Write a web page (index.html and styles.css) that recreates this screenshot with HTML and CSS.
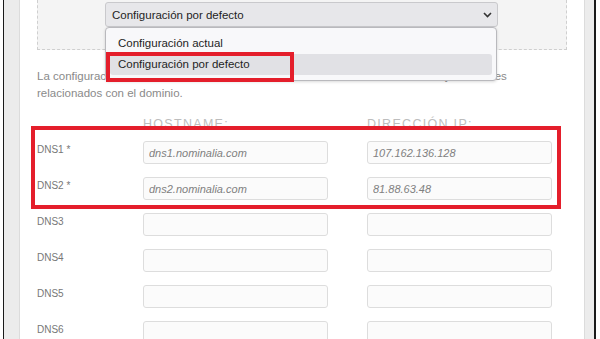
FILE: index.html
```html
<!DOCTYPE html>
<html lang="es">
<head>
  <meta charset="UTF-8">
  <meta name="viewport" content="width=device-width, initial-scale=1.0">
  <title>Servidores DNS</title>
  <link rel="stylesheet" href="styles.css">
</head>
<body>
  <div class="frame">
    <div class="rail rail-left"></div>
    <main class="panel">
      <div class="config-box">
        <div class="select-wrap">
          <div class="select">
            <span>Configuración por defecto</span>
            <svg class="chevron" width="9" height="6" viewBox="0 0 9 6">
              <path d="M1 1l3.5 3.5L8 1" fill="none" stroke="#333" stroke-width="1.6"/>
            </svg>
          </div>
          <ul class="select-menu">
            <li>Configuración actual</li>
            <li class="active">Configuración por defecto</li>
          </ul>
          <span class="mark mark-option"></span>
        </div>
      </div>

      <p class="intro">La configuración por defecto asigna los DNS de Nominalia a todos los servicios y servidores relacionados con el dominio.</p>

      <div class="dns-grid">
        <span></span>
        <span class="col-head">Hostname:</span>
        <span class="col-head">Dirección IP:</span>

        <label>DNS1 *</label>
        <input type="text" value="dns1.nominalia.com">
        <input type="text" value="107.162.136.128">

        <label>DNS2 *</label>
        <input type="text" value="dns2.nominalia.com">
        <input type="text" value="81.88.63.48">

        <label>DNS3</label>
        <input type="text">
        <input type="text">

        <label>DNS4</label>
        <input type="text">
        <input type="text">

        <label>DNS5</label>
        <input type="text">
        <input type="text">

        <label>DNS6</label>
        <input type="text">
        <input type="text">
      </div>

      <span class="mark mark-rows"></span>
    </main>
    <div class="rail rail-right"></div>
  </div>
</body>
</html>
```

FILE: styles.css
```css
body {
  margin: 0;
  background-color: #ffffff;
  font-family: 'Liberation Sans', Arial, sans-serif;
}
.frame {
  display: flex;
  height: 100vh;
  margin: 0 4px 0 3px;
  border-left: 1px solid #1a1a1a;
  border-right: 2px solid #1a1a1a;
  overflow: hidden;
}
.rail {
  background-color: #ececec;
}
.rail-left {
  width: 15px;
  border-right: 1px solid #dcdcdc;
}
.rail-right {
  width: 9px;
  border-left: 1px solid #dcdcdc;
}
.panel {
  flex: 1;
  position: relative;
  padding: 0 17px;
  background-color: #ffffff;
}
.config-box {
  padding: 2px 0 22px 67px;
  background-color: #f4f4f4;
  border: 1px dashed #cfcfcf;
  border-top: none;
}
.select-wrap {
  position: relative;
  width: 393px;
}
.select {
  display: flex;
  align-items: center;
  justify-content: space-between;
  height: 25px;
  box-sizing: border-box;
  padding: 0 5px 0 6px;
  background-color: #e7e7ea;
  border: 1px solid #c9c9cc;
  border-radius: 3px;
  font-size: 11.5px;
  color: #1e1e1e;
}
.select-menu {
  position: absolute;
  top: 25px;
  left: 0;
  width: 392px;
  height: 54px;
  box-sizing: border-box;
  margin: 0;
  padding: 5px 4px 4px;
  list-style: none;
  background-color: #f8f8fa;
  border: 1px solid #b9b9bd;
  border-radius: 4px;
  box-shadow: 0 1px 3px rgba(0, 0, 0, 0.15);
  font-size: 11.5px;
  color: #1e1e1e;
}
.select-menu li {
  height: 21px;
  line-height: 21px;
  padding: 0 8px;
  border-radius: 3px;
}
.select-menu li.active {
  background-color: #e1e1e5;
}
.mark {
  position: absolute;
  box-sizing: border-box;
  border: 4px solid #e41e2b;
}
.mark-option {
  left: 1px;
  top: 50px;
  width: 188px;
  height: 30px;
}
.mark-rows {
  left: 11px;
  top: 126px;
  width: 530px;
  height: 83px;
}
.intro {
  margin: 18px 0 0;
  font-size: 11.5px;
  line-height: 17px;
  color: #8a8a8a;
}
.dns-grid {
  display: grid;
  grid-template-columns: 67px 185px 185px;
  column-gap: 39px;
  row-gap: 13px;
  margin-top: 15px;
}
.col-head {
  margin-bottom: -3px;
  font-size: 12.5px;
  line-height: 14px;
  letter-spacing: 1.3px;
  text-transform: uppercase;
  color: #bdbdbd;
}
.dns-grid label {
  padding-top: 3px;
  font-size: 10px;
  line-height: 12px;
  color: #777777;
}
.dns-grid input {
  height: 23px;
  box-sizing: border-box;
  padding: 0 5px;
  background-color: #fbfbfb;
  border: 1px solid #dddddd;
  border-radius: 3px;
  font-family: 'Liberation Sans', Arial, sans-serif;
  font-size: 11px;
  font-style: italic;
  color: #808080;
}
```
